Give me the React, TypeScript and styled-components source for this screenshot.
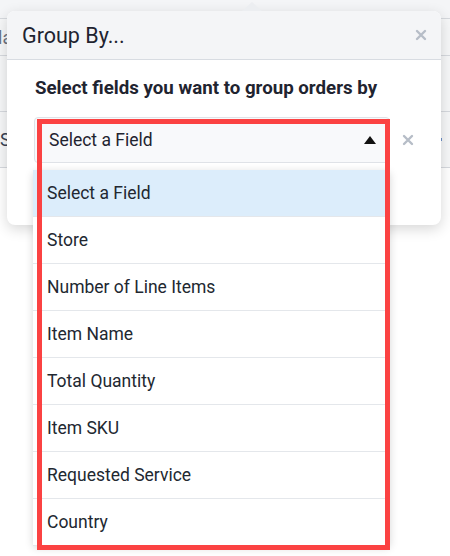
import React from "react";
import styled, { createGlobalStyle } from "styled-components";

const GlobalStyle = createGlobalStyle`
  html, body {
    margin: 0;
    padding: 0;
    background: #ffffff;
    font-family: Roboto, "Liberation Sans", Arial, sans-serif;
    color: #1f2430;
  }
  * { box-sizing: border-box; }
`;

const Page = styled.div`
  position: relative;
  width: 450px;
  height: 556px;
  overflow: hidden;
  background: #ffffff;
`;

/* faint page behind the popover */
const Backdrop = styled.div`
  display: flex;
  flex-direction: column;
`;

const TopStrip = styled.div`
  height: 19px;
  background: #f4f5f7;
  border-bottom: 1px solid #d6d9de;
`;

const FilterRow = styled.div`
  height: 37px;
  display: flex;
  align-items: center;
  background: #f6f7f8;
  border-bottom: 1px solid #d6d9de;
  font-size: 18px;
  color: #6b7280;
  text-indent: -2px;
`;

const Spacer = styled.div<{ $h: number }>`
  height: ${(p) => p.$h}px;
  background: #f6f7f8;
`;

const TableRow = styled.div`
  height: 57px;
  display: flex;
  align-items: center;
  justify-content: space-between;
  border-top: 1px solid #d6d9de;
  border-bottom: 1px solid #d6d9de;
  background: #f6f7f8;
  font-size: 18px;
  color: #374151;
`;

const Dot = styled.span`
  width: 2px;
  height: 3px;
  margin-right: 8px;
  background: #6d8fc7;
`;

const Popover = styled.div`
  position: absolute;
  left: 7px;
  top: 11px;
  width: 434px;
  height: 214px;
  background: #ffffff;
  border-radius: 8px;
  box-shadow: 0 4px 14px rgba(0, 0, 0, 0.16);
`;

const Arrow = styled.div`
  position: absolute;
  top: -9px;
  left: 235px;
  width: 0;
  height: 0;
  border-left: 10px solid transparent;
  border-right: 10px solid transparent;
  border-bottom: 9px solid #eceef1;
`;

const Header = styled.div`
  height: 49px;
  display: flex;
  align-items: center;
  justify-content: space-between;
  padding: 0 14px 0 15px;
  background: #f4f5f7;
  border-bottom: 1px solid #d8dce2;
  border-radius: 8px 8px 0 0;
`;

const Title = styled.h2`
  margin: 0;
  font-size: 21.5px;
  font-weight: 400;
  color: #1f2430;
`;

const CloseIcon = ({ size, color }: { size: number; color: string }) => (
  <svg width={size} height={size} viewBox="0 0 12 12">
    <path
      d="M2 2 L10 10 M10 2 L2 10"
      stroke={color}
      strokeWidth="2.4"
      strokeLinecap="round"
    />
  </svg>
);

const IconButton = styled.button`
  border: 0;
  background: none;
  padding: 0;
  display: flex;
  cursor: pointer;
`;

const Body = styled.div`
  padding: 16px 0 0 28px;
`;

const Prompt = styled.p`
  margin: 0;
  font-size: 18.7px;
  line-height: 25px;
  font-weight: 700;
  color: #1f2430;
`;

const FieldRow = styled.div`
  margin-top: 16px;
  display: flex;
  align-items: center;
  gap: 12px;
  margin-left: -1px;
`;

const SelectWrap = styled.div`
  position: relative;
  width: 356px;
`;

const SelectControl = styled.div`
  height: 46px;
  display: flex;
  align-items: center;
  justify-content: space-between;
  padding: 0 13px 0 14px;
  border: 1px solid #dfe2e7;
  border-radius: 4px;
  background: #f8f9fb;
  font-size: 17.5px;
  color: #1f2430;
`;

const Caret = styled.span`
  width: 0;
  height: 0;
  border-left: 6px solid transparent;
  border-right: 6px solid transparent;
  border-bottom: 8px solid #111111;
`;

const Menu = styled.ul`
  position: absolute;
  top: 53px;
  left: -1px;
  width: 357px;
  margin: 0;
  padding: 0;
  list-style: none;
  background: #ffffff;
  border-radius: 4px;
  box-shadow: 0 2px 8px rgba(0, 0, 0, 0.16);
  z-index: 2;
`;

const Option = styled.li<{ $active?: boolean }>`
  height: 47px;
  display: flex;
  align-items: center;
  padding-left: 14px;
  font-size: 17.5px;
  color: #222831;
  background: ${(p) => (p.$active ? "#dcedfb" : "#ffffff")};
  border-bottom: 1px solid #e4e7eb;
`;

const Highlight = styled.div`
  position: absolute;
  left: 37px;
  top: 119px;
  width: 353px;
  height: 431px;
  border: 5px solid #fb4242;
  pointer-events: none;
  z-index: 5;
`;

const options = [
  "Select a Field",
  "Store",
  "Number of Line Items",
  "Item Name",
  "Total Quantity",
  "Item SKU",
  "Requested Service",
  "Country",
];

export default function App() {
  return (
    <>
      <GlobalStyle />
      <Page>
        <Backdrop>
          <TopStrip />
          <FilterRow>la</FilterRow>
          <Spacer $h={55} />
          <TableRow>
            S
            <Dot />
          </TableRow>
        </Backdrop>

        <Popover>
          <Arrow />
          <Header>
            <Title>Group By...</Title>
            <IconButton aria-label="Close">
              <CloseIcon size={12} color="#b6bdc7" />
            </IconButton>
          </Header>
          <Body>
            <Prompt>Select fields you want to group orders by</Prompt>
            <FieldRow>
              <SelectWrap>
                <SelectControl>
                  Select a Field
                  <Caret />
                </SelectControl>
                <Menu>
                  {options.map((o, i) => (
                    <Option key={o} $active={i === 0}>
                      {o}
                    </Option>
                  ))}
                </Menu>
              </SelectWrap>
              <IconButton aria-label="Remove">
                <CloseIcon size={12} color="#b6bdc7" />
              </IconButton>
            </FieldRow>
          </Body>
        </Popover>

        <Highlight />
      </Page>
    </>
  );
}
